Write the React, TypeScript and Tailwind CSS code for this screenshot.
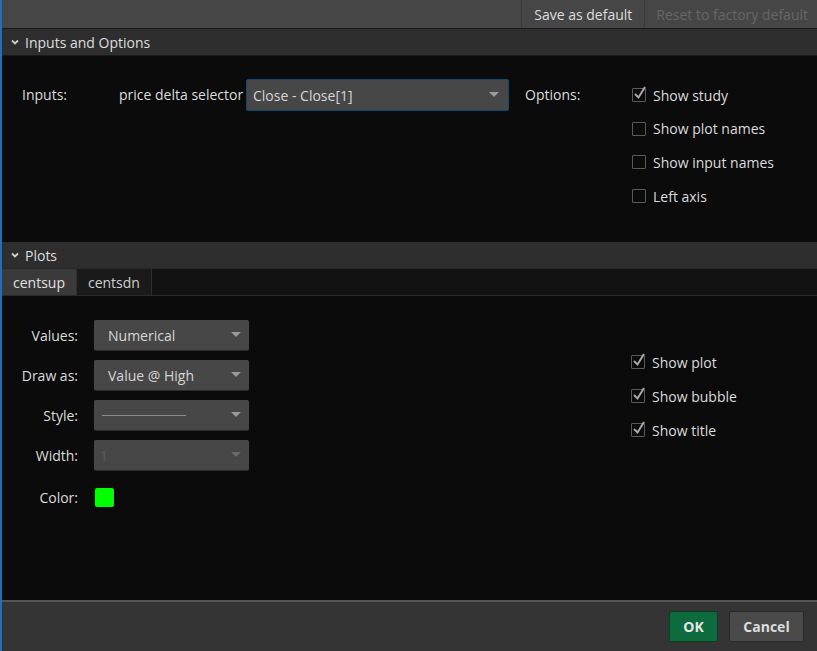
import { useState } from "react";

function Chevron() {
  return (
    <svg width="10" height="10" viewBox="0 0 10 10" className="mr-[5px]">
      <path d="M2 3.5 L5 6.5 L8 3.5" stroke="#cfcfcf" strokeWidth="1.8" fill="none" />
    </svg>
  );
}

function Caret({ dim }: { dim?: boolean }) {
  return (
    <svg width="10" height="6" viewBox="0 0 10 6">
      <path d="M0 0 L10 0 L5 5 Z" fill={dim ? "#6a6a6a" : "#9a9a9a"} />
    </svg>
  );
}

function Check({ checked, label }: { checked: boolean; label: string }) {
  return (
    <div className="flex items-center h-[20px]">
      <span className="relative w-[14px] h-[14px] border border-[#5a5a5a] rounded-[1px] mr-[7px]">
        {checked && (
          <svg width="16" height="16" viewBox="0 0 16 16" className="absolute left-[-1px] top-[-4px]">
            <path d="M3 9 L6.5 12.5 L13 2" stroke="#a8a8a8" strokeWidth="2" fill="none" />
          </svg>
        )}
      </span>
      <span className="text-[14px] text-[#dcdcdc]">{label}</span>
    </div>
  );
}

function Select({ value, disabled, line }: { value?: string; disabled?: boolean; line?: boolean }) {
  return (
    <div className="w-[155px] h-[31px] bg-[#474747] rounded-[2px] border-b border-[#2a2a2a] flex items-center justify-between pl-[14px] pr-[8px]">
      {line ? (
        <span className="block w-[84px] h-px bg-[#8a8a8a] -ml-[6px]" />
      ) : (
        <span className={`text-[14px] ${disabled ? "text-[#5e5e5e] -ml-[8px]" : "text-[#d6d6d6]"}`}>{value}</span>
      )}
      <Caret dim={disabled} />
    </div>
  );
}

export default function App() {
  const [tab, setTab] = useState("centsup");
  return (
    <div
      className="w-[817px] h-[651px] flex flex-col bg-[#0b0b0b] border-l-2 border-[#1d6ec4] text-[#dcdcdc] overflow-hidden"
      style={{ fontFamily: '"Open Sans", "Noto Sans", sans-serif' }}
    >
      {/* top toolbar */}
      <div className="h-[29px] bg-[#464646] border-b border-[#1a1a1a] flex justify-end items-stretch">
        <button className="px-[12px] border-l border-r border-[#3a3a3a] text-[14px] text-[#dedede]">Save as default</button>
        <button className="pl-[11px] pr-[9px] text-[14px] text-[#676767]">Reset to factory default</button>
      </div>

      {/* Inputs and Options */}
      <div className="h-[27px] bg-[#2e2e2e] flex items-center pl-[8px] text-[14px] text-[#dedede] border-b border-[#1a1a1a]">
        <Chevron />
        Inputs and Options
      </div>
      <div className="h-[186px] flex pt-[23px]">
        <div className="flex items-start">
          <div className="w-[117px] pl-[20px] h-[31px] flex items-center text-[14px]">Inputs:</div>
          <div className="w-[127px] h-[31px] flex items-center text-[14px]">price delta selector</div>
          <div className="w-[263px] h-[32px] bg-[#474747] border border-[#0f4a70] rounded-[2px] flex items-center justify-between pl-[6px] pr-[9px]">
            <span className="text-[14px] text-[#d6d6d6]">Close - Close[1]</span>
            <Caret />
          </div>
          <div className="w-[123px] pl-[16px] h-[31px] flex items-center text-[14px]">Options:</div>
        </div>
        <div className="flex flex-col gap-[13.7px] pt-[6px]">
          <Check checked label="Show study" />
          <Check checked={false} label="Show plot names" />
          <Check checked={false} label="Show input names" />
          <Check checked={false} label="Left axis" />
        </div>
      </div>

      {/* Plots */}
      <div className="h-[26px] bg-[#2e2e2e] flex items-center pl-[8px] text-[14px] text-[#dedede]">
        <Chevron />
        Plots
      </div>
      <div className="h-[28px] bg-[#121212] flex border-t border-b border-[#2a2a2a]">
        {["centsup", "centsdn"].map((t) => (
          <button
            key={t}
            onClick={() => setTab(t)}
            className={`px-[11px] text-[14px] border-r border-[#2e2e2e] ${
              tab === t ? "bg-[#3a3a3a] text-[#e0e0e0]" : "bg-[#1a1a1a] text-[#d0d0d0]"
            }`}
          >
            {t}
          </button>
        ))}
      </div>
      <div className="flex-1 flex pt-[24px]">
        <div className="grid grid-cols-[76px_155px] gap-x-[16px] gap-y-[9px] items-center content-start">
          <span className="text-right text-[14px]">Values:</span>
          <Select value="Numerical" />
          <span className="text-right text-[14px]">Draw as:</span>
          <Select value="Value @ High" />
          <span className="text-right text-[14px]">Style:</span>
          <Select line />
          <span className="text-right text-[14px]">Width:</span>
          <Select value="1" disabled />
          <span className="text-right text-[14px] mt-[7px]">Color:</span>
          <span className="block w-[19px] h-[19px] bg-[#00ff00] rounded-[2px] mt-[7px] ml-[1px]" />
        </div>
        <div className="ml-[382px] pt-[32px] flex flex-col gap-[14px]">
          <Check checked label="Show plot" />
          <Check checked label="Show bubble" />
          <Check checked label="Show title" />
        </div>
      </div>

      {/* footer */}
      <div className="h-[51px] bg-[#343434] border-t-2 border-[#555] flex items-center justify-end gap-[11px] pr-[13px] pb-[1px]">
        <button className="w-[49px] h-[31px] bg-[#0d6b3e] border border-[#0a3f26] rounded-[2px] text-[14px] font-bold text-[#e6e6e6]">
          OK
        </button>
        <button className="w-[75px] h-[31px] bg-[#4a4a4a] border border-[#2a2a2a] rounded-[2px] text-[14px] font-bold text-[#dcdcdc]">
          Cancel
        </button>
      </div>
    </div>
  );
}
